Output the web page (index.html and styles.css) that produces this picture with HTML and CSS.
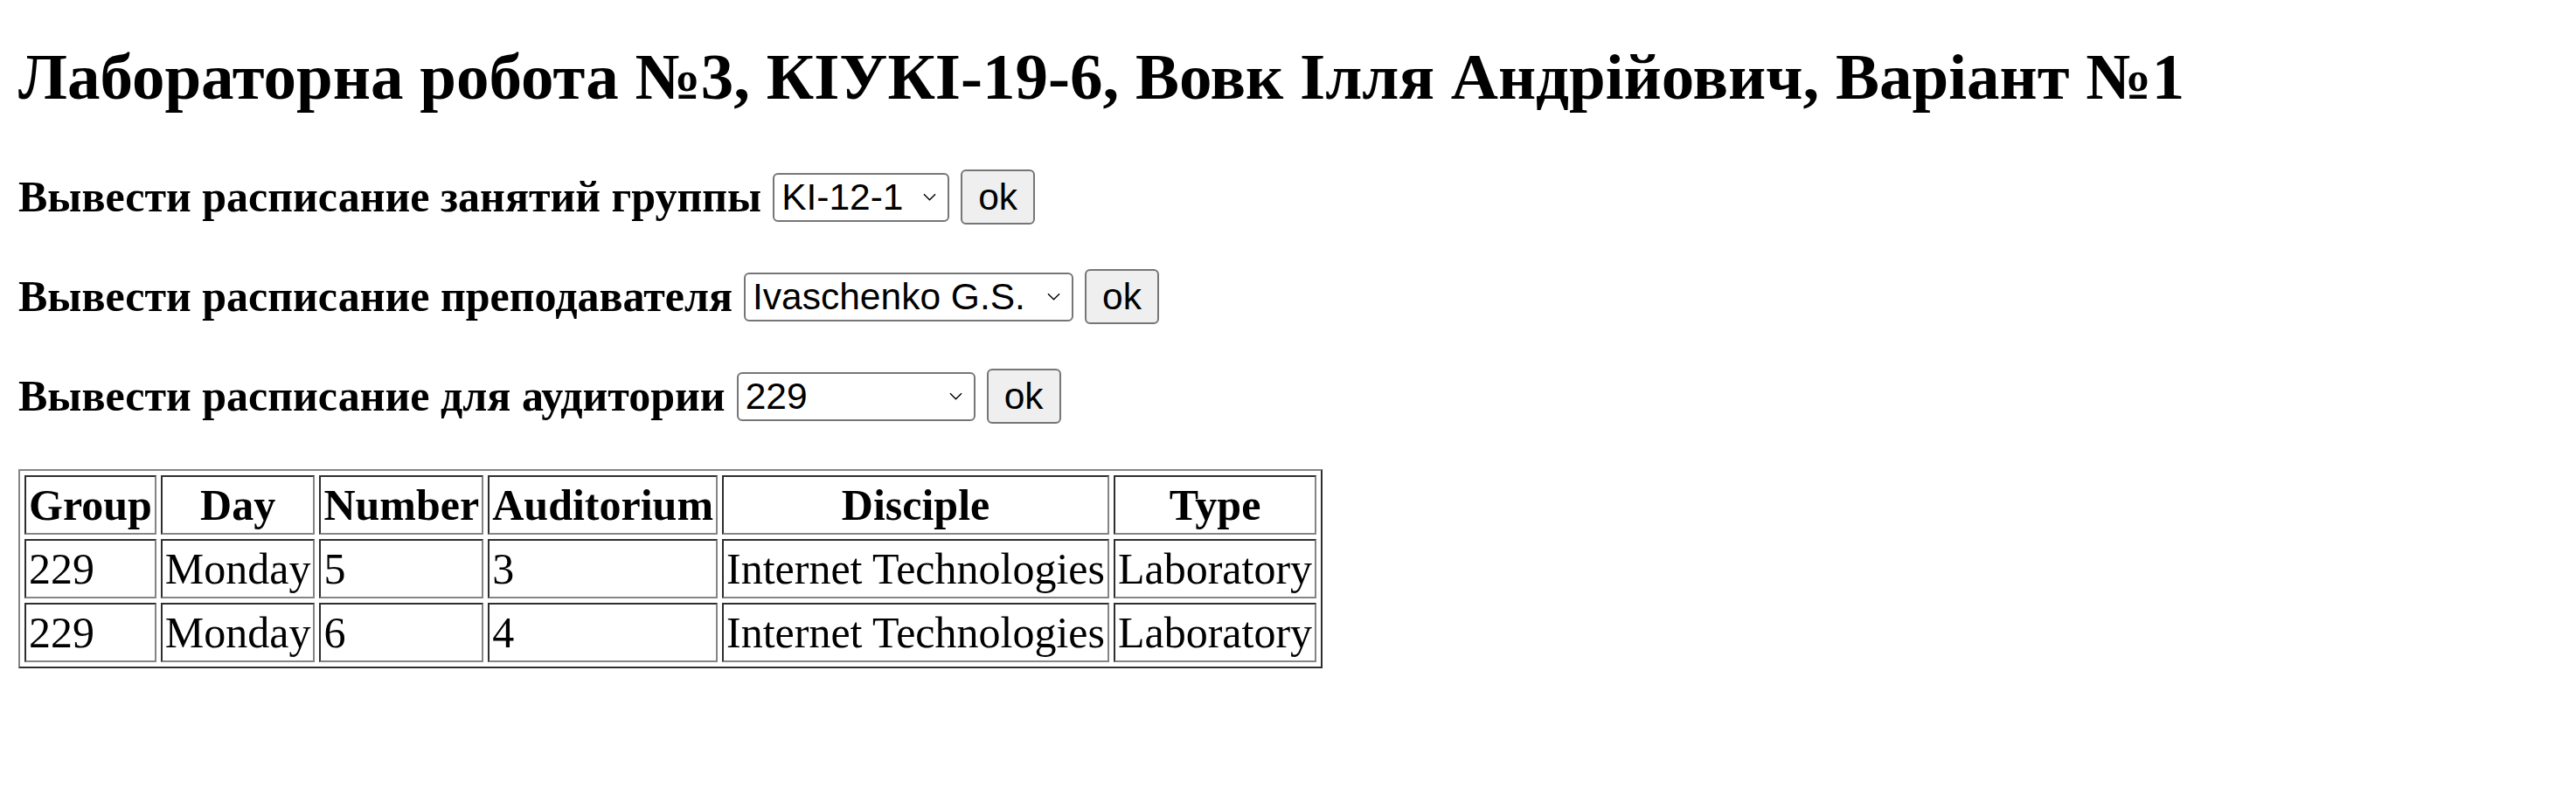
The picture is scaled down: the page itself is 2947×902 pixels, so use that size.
FILE: index.html
```html
<!DOCTYPE html>
<html lang="uk">
<head>
<meta charset="utf-8">
<title>Лабораторна робота №3</title>
<link rel="stylesheet" href="styles.css">
</head>
<body>
<h1 class="title">Лабораторна робота №3, КІУКІ-19-6, Вовк Ілля Андрійович, Варіант №1</h1>

<form class="query">
  <span class="query-label">Вывести расписание занятий группы</span>
  <span class="select-wrap">
    <select class="select select-group"><option>KI-12-1</option></select>
    <svg class="chevron" viewBox="0 0 16 9"><path d="M1 1 L8 8 L15 1"/></svg>
  </span>
  <button class="ok-btn" type="button">ok</button>
</form>

<form class="query">
  <span class="query-label">Вывести расписание преподавателя</span>
  <span class="select-wrap">
    <select class="select select-teacher"><option>Ivaschenko G.S.</option></select>
    <svg class="chevron" viewBox="0 0 16 9"><path d="M1 1 L8 8 L15 1"/></svg>
  </span>
  <button class="ok-btn" type="button">ok</button>
</form>

<form class="query">
  <span class="query-label">Вывести расписание для аудитории</span>
  <span class="select-wrap">
    <select class="select select-room"><option>229</option></select>
    <svg class="chevron" viewBox="0 0 16 9"><path d="M1 1 L8 8 L15 1"/></svg>
  </span>
  <button class="ok-btn" type="button">ok</button>
</form>

<table class="schedule">
  <tr><th>Group</th><th>Day</th><th>Number</th><th>Auditorium</th><th>Disciple</th><th>Type</th></tr>
  <tr><td>229</td><td>Monday</td><td>5</td><td>3</td><td>Internet Technologies</td><td>Laboratory</td></tr>
  <tr><td>229</td><td>Monday</td><td>6</td><td>4</td><td>Internet Technologies</td><td>Laboratory</td></tr>
</table>
</body>
</html>
```

FILE: styles.css
```css
html, body {
  margin: 0;
  background: #ffffff;
  color: #000000;
}
body {
  padding: 0 0 0 21px;
  font-family: "Liberation Serif", "Times New Roman", serif;
}
.title {
  margin: 45px 0 0 0;
  font-size: 75px;
  line-height: 86px;
  font-weight: bold;
  white-space: nowrap;
}
.query {
  display: flex;
  align-items: center;
  gap: 13px;
  height: 63px;
  margin-top: 51px;
}
.title + .query {
  margin-top: 63px;
}
.query-label {
  font-size: 50px;
  line-height: 55px;
  font-weight: bold;
  white-space: nowrap;
}
.select-wrap {
  position: relative;
  display: inline-flex;
}
.select {
  appearance: none;
  -webkit-appearance: none;
  box-sizing: border-box;
  height: 56px;
  margin: 0;
  padding: 0 30px 0 8px;
  border: 2px solid #767676;
  border-radius: 6px;
  background: #ffffff;
  color: #000000;
  font-family: "Liberation Sans", Arial, sans-serif;
  font-size: 42.5px;
}
.select-group { width: 202px; }
.select-teacher { width: 377px; }
.select-room { width: 273px; }
.chevron {
  position: absolute;
  right: 15px;
  top: 23px;
  width: 15px;
  height: 9px;
  fill: none;
  stroke: #000000;
  stroke-width: 1.5;
  pointer-events: none;
}
.ok-btn {
  box-sizing: border-box;
  height: 63px;
  margin: 0;
  padding: 0 18px;
  border: 2px solid #767676;
  border-radius: 6px;
  background: #efefef;
  color: #000000;
  font-family: "Liberation Sans", Arial, sans-serif;
  font-size: 42.5px;
}
.schedule {
  margin-top: 52px;
  border: 2px solid;
  border-color: #858585 #2e2e2e #2e2e2e #858585;
  border-spacing: 5px;
  font-size: 50px;
}
.schedule th,
.schedule td {
  border: 2px solid;
  border-color: #2e2e2e #858585 #858585 #2e2e2e;
  padding: 3px 3px;
  line-height: 58px;
  white-space: nowrap;
}
.schedule th {
  font-weight: bold;
  text-align: center;
}
.schedule td {
  text-align: left;
}
```
